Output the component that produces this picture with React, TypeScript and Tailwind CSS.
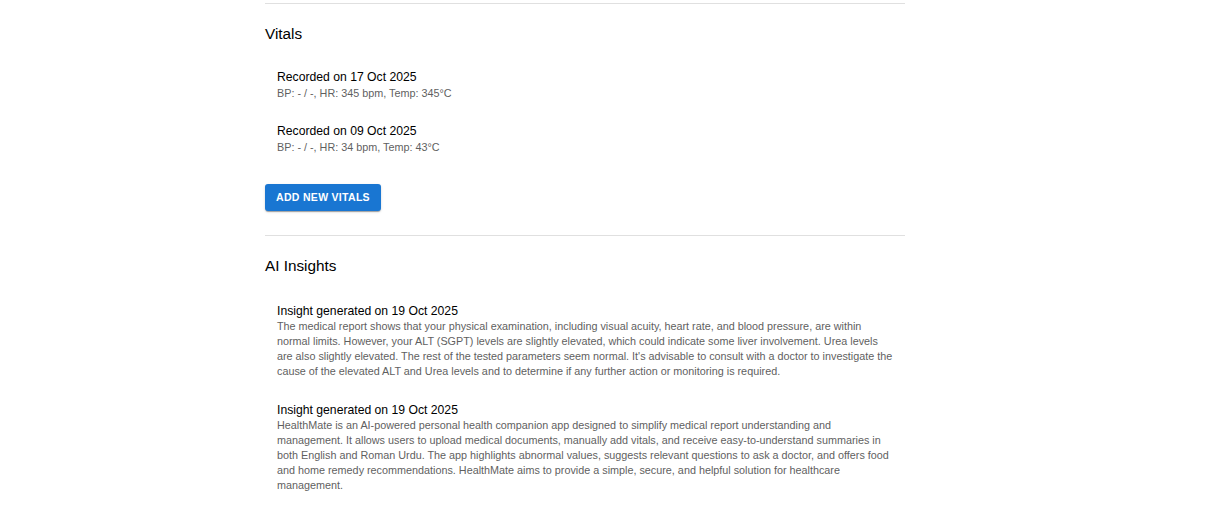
import React from 'react';

const vitals = [
  { date: '17 Oct 2025', detail: 'BP: - / -, HR: 345 bpm, Temp: 345°C' },
  { date: '09 Oct 2025', detail: 'BP: - / -, HR: 34 bpm, Temp: 43°C' },
];

const insights = [
  {
    date: '19 Oct 2025',
    text: "The medical report shows that your physical examination, including visual acuity, heart rate, and blood pressure, are within normal limits. However, your ALT (SGPT) levels are slightly elevated, which could indicate some liver involvement. Urea levels are also slightly elevated. The rest of the tested parameters seem normal. It's advisable to consult with a doctor to investigate the cause of the elevated ALT and Urea levels and to determine if any further action or monitoring is required.",
  },
  {
    date: '19 Oct 2025',
    text: 'HealthMate is an AI-powered personal health companion app designed to simplify medical report understanding and management. It allows users to upload medical documents, manually add vitals, and receive easy-to-understand summaries in both English and Roman Urdu. The app highlights abnormal values, suggests relevant questions to ask a doctor, and offers food and home remedy recommendations. HealthMate aims to provide a simple, secure, and helpful solution for healthcare management.',
  },
];

function Entry({ title, body, tall }: { title: string; body: string; tall?: boolean }) {
  return (
    <li className="px-3">
      <p className={tall ? 'pt-[2px] text-[12.2px] leading-[16px] text-black' : 'text-[12.2px] leading-[18px] text-black'}>
        {title}
      </p>
      <p className="text-[10.8px] leading-[15px] text-[#5f5f5f]">{body}</p>
    </li>
  );
}

export default function App() {
  return (
    <div className="min-h-screen bg-white font-['Liberation_Sans',Arial,sans-serif] pl-[265px] pt-[3px]">
      <div className="w-[640px]">
        {/* Vitals */}
        <hr className="border-t border-[#e0e0e0]" />
        <h2 className="mt-[18px] text-[15.3px] leading-[24px] text-black">Vitals</h2>
        <ul className="mt-[22px] flex flex-col gap-[21px]">
          {vitals.map((v) => (
            <Entry key={v.date} title={`Recorded on ${v.date}`} body={v.detail} />
          ))}
        </ul>
        <button className="mt-[29px] h-[27px] w-[116px] rounded-[3px] bg-[#1976d2] text-[10.5px] font-bold uppercase tracking-[0.3px] text-white shadow-[0_2px_1px_-1px_rgba(0,0,0,0.2),0_1px_1px_0_rgba(0,0,0,0.14),0_1px_3px_0_rgba(0,0,0,0.12)]">
          Add New Vitals
        </button>

        {/* AI Insights */}
        <hr className="mt-[24px] border-t border-[#e0e0e0]" />
        <h2 className="mt-[18px] text-[15.3px] leading-[24px] text-black">AI Insights</h2>
        <ul className="mt-[23px] flex flex-col gap-[21px]">
          {insights.map((i, idx) => (
            <Entry key={idx} tall title={`Insight generated on ${i.date}`} body={i.text} />
          ))}
        </ul>
      </div>
    </div>
  );
}
